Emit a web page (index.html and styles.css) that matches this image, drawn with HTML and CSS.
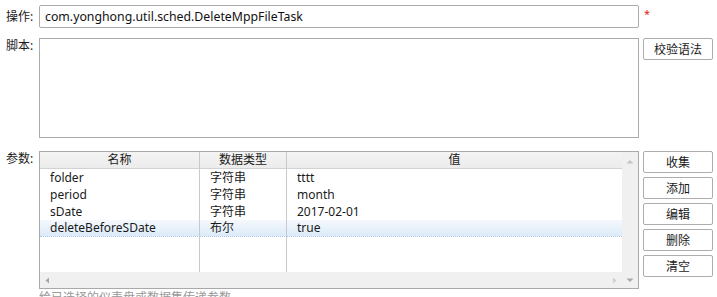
FILE: index.html
```html
<!DOCTYPE html>
<html lang="zh">
<head>
<meta charset="utf-8">
<link rel="stylesheet" href="styles.css">
</head>
<body>
<div class="form">
  <div class="row row-op">
    <label class="lbl">操作:</label>
    <div class="field"><div class="input">com.yonghong.util.sched.DeleteMppFileTask</div></div>
    <div class="side"><span class="req">*</span></div>
  </div>
  <div class="row row-script">
    <label class="lbl">脚本:</label>
    <div class="field"><div class="textarea"></div></div>
    <div class="side"><button class="btn">校验语法</button></div>
  </div>
  <div class="row row-params">
    <label class="lbl">参数:</label>
    <div class="field">
      <div class="table">
        <div class="tmain">
          <div class="grid">
            <div class="hc">名称</div><div class="hc">数据类型</div><div class="hc last">值</div>
            <div class="c">folder</div><div class="c">字符串</div><div class="c last">tttt</div>
            <div class="c">period</div><div class="c">字符串</div><div class="c last">month</div>
            <div class="c">sDate</div><div class="c">字符串</div><div class="c last">2017-02-01</div>
            <div class="c sel">deleteBeforeSDate</div><div class="c sel">布尔</div><div class="c sel last">true</div>
            <div class="f"></div><div class="f"></div><div class="f last"></div>
          </div>
          <div class="hscroll">
            <svg class="arr" width="7" height="7" viewBox="0 0 7 7"><path d="M5 0.5 L1.5 3.5 L5 6.5 Z" fill="#a8a8a8"/></svg>
            <svg class="arr" width="7" height="7" viewBox="0 0 7 7"><path d="M2 0.5 L5.5 3.5 L2 6.5 Z" fill="#cfcfcf"/></svg>
          </div>
        </div>
        <div class="vscroll">
          <svg width="8" height="6" viewBox="0 0 8 6"><path d="M0.5 4.5 L4 1 L7.5 4.5 Z" fill="#c4c4c4"/></svg>
          <svg width="8" height="6" viewBox="0 0 8 6"><path d="M0.5 1.5 L4 5 L7.5 1.5 Z" fill="#a8a8a8"/></svg>
        </div>
      </div>
    </div>
    <div class="side col">
      <button class="btn">收集</button>
      <button class="btn">添加</button>
      <button class="btn">编辑</button>
      <button class="btn">删除</button>
      <button class="btn">清空</button>
    </div>
  </div>
  <div class="hint">给已选择的仪表盘或数据集传递参数</div>
</div>
</body>
</html>
```
FILE: styles.css
```css
html, body {
  margin: 0;
  padding: 0;
  background: #fff;
}
body {
  font-family: "Noto Sans", "Noto Sans CJK SC", sans-serif;
  font-size: 12px;
  color: #1a1a1a;
  overflow: hidden;
}
.form {
  padding-top: 5px;
}
.row {
  display: flex;
  align-items: flex-start;
}
.lbl {
  width: 39px;
  box-sizing: border-box;
  padding-left: 6px;
  line-height: 16px;
  flex: none;
}
.row-op { align-items: center; }
.row-script { margin-top: 10px; }
.row-params { margin-top: 13px; }
.field {
  width: 600px;
  flex: none;
}
.side {
  margin-left: 4px;
  width: 70px;
  flex: none;
}
.req {
  color: #e02020;
  font-size: 11px;
  margin-left: 1px;
  position: relative;
  top: -3px;
}
.input {
  box-sizing: border-box;
  height: 23px;
  border: 1px solid #ababab;
  border-radius: 2px;
  padding-left: 5px;
  line-height: 21px;
  font-size: 12.3px;
  color: #111;
}
.textarea {
  box-sizing: border-box;
  height: 100px;
  border: 1px solid #ababab;
}
.btn {
  display: block;
  box-sizing: border-box;
  width: 70px;
  height: 22px;
  margin: 0;
  padding: 0;
  border: 1px solid #adadad;
  border-radius: 2px;
  background: #fff;
  font-family: inherit;
  font-size: 12px;
  color: #1a1a1a;
}
.col {
  display: flex;
  flex-direction: column;
  gap: 4px;
}
.table {
  box-sizing: border-box;
  height: 138px;
  border: 1px solid #a9a9a9;
  display: flex;
}
.tmain {
  width: 582px;
  display: flex;
  flex-direction: column;
}
.grid {
  flex: 1;
  display: grid;
  grid-template-columns: 160px 87px 1fr;
  grid-template-rows: 17px repeat(4, 17px) 1fr;
}
.hc {
  background: linear-gradient(#f4f4f4, #ececec);
  border-right: 1px solid #c9c9c9;
  border-bottom: 1px solid #d2d2d2;
  text-align: center;
  line-height: 16px;
}
.c {
  border-right: 1px solid #c9c9c9;
  padding-left: 10px;
  line-height: 17px;
  white-space: nowrap;
}
.f {
  border-right: 1px solid #c9c9c9;
}
.last { border-right: none; }
.sel {
  background: linear-gradient(#f4f8fc, #dcebf9);
  border-bottom: 1px dotted #a9c8e6;
  line-height: 16px;
}
.hscroll {
  height: 16px;
  background: #f0f0f0;
  display: flex;
  align-items: center;
  justify-content: space-between;
  padding: 0 4px 0 4px;
}
.vscroll {
  width: 16px;
  background: #f0f0f0;
  display: flex;
  flex-direction: column;
  align-items: center;
  justify-content: space-between;
  padding: 7px 0 5px;
  box-sizing: border-box;
}
.hint {
  margin-top: 1px;
  padding-left: 39px;
  color: #9a9a9a;
  line-height: 16px;
}
```
